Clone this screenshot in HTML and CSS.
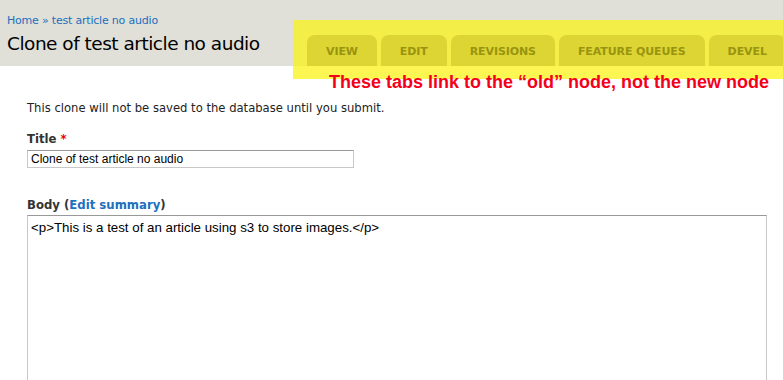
FILE: index.html
```html
<!DOCTYPE html>
<html>
<head>
<meta charset="utf-8">
<link rel="stylesheet" href="styles.css">
</head>
<body>
<div class="page">
  <div class="header">
    <div class="header-left">
      <div class="breadcrumb"><a href="#">Home</a> » <a href="#">test article no audio</a></div>
      <h1>Clone of test article no audio</h1>
    </div>
    <ul class="tabs">
      <li class="tab tab-view"><a href="#">View</a></li>
      <li class="tab tab-edit"><a href="#">Edit</a></li>
      <li class="tab tab-rev"><a href="#">Revisions</a></li>
      <li class="tab tab-fq"><a href="#">Feature queues</a></li>
      <li class="tab tab-devel"><a href="#">Devel</a></li>
    </ul>
    <div class="highlight"></div>
    <div class="note">These tabs link to the “old” node, not the new node</div>
  </div>
  <div class="content">
    <p class="message">This clone will not be saved to the database until you submit.</p>
    <div class="field">
      <label class="label">Title <span class="req">*</span></label>
      <div class="input">Clone of test article no audio</div>
    </div>
    <div class="field body-field">
      <label class="label">Body (<a href="#">Edit summary</a>)</label>
      <div class="textarea">&lt;p&gt;This is a test of an article using s3 to store images.&lt;/p&gt;</div>
    </div>
  </div>
</div>
</body>
</html>
```

FILE: styles.css
```css
html, body {
  margin: 0;
  padding: 0;
  background: #fff;
}
.page {
  width: 783px;
  height: 380px;
  overflow: hidden;
  font-family: "DejaVu Sans", sans-serif;
}
a {
  color: #2170bd;
  text-decoration: none;
}
.header {
  position: relative;
  display: flex;
  align-items: flex-end;
  height: 66px;
  background: #e0dfd8;
}
.header-left {
  flex: 0 0 300px;
  align-self: stretch;
  padding-left: 7px;
}
.breadcrumb {
  margin-top: 14px;
  font-size: 11px;
  line-height: 14px;
  letter-spacing: -0.2px;
  color: #2170bd;
}
h1 {
  margin: 4px 0 0;
  font-size: 18.5px;
  line-height: 24px;
  font-weight: normal;
  letter-spacing: -0.5px;
  color: #000;
  white-space: nowrap;
}
.tabs {
  position: relative;
  z-index: 2;
  display: flex;
  gap: 4px;
  margin: 0;
  padding: 0;
  list-style: none;
  flex-shrink: 0;
}
.tab {
  height: 31px;
  display: flex;
  align-items: center;
  padding: 2px 19px 0;
  box-sizing: border-box;
  background: #dcd534;
  border-radius: 8px 8px 0 0;
}
.tab a {
  color: #99940f;
  font-size: 11px;
  font-weight: bold;
  letter-spacing: -0.1px;
  text-transform: uppercase;
}
.highlight {
  position: absolute;
  z-index: 1;
  left: 293px;
  top: 20px;
  width: 490px;
  height: 59px;
  background: rgba(250, 243, 24, 0.75);
}
.note {
  position: absolute;
  z-index: 3;
  left: 329px;
  top: 72px;
  font-family: "Liberation Sans", sans-serif;
  font-size: 18px;
  font-weight: bold;
  line-height: 20px;
  color: #f5001a;
  white-space: nowrap;
}
.content {
  padding: 0 16px 0 27px;
}
.message {
  margin: 0;
  padding-top: 35px;
  font-size: 11.6px;
  line-height: 14px;
  color: #222;
}
.field {
  margin-top: 17px;
}
.label {
  display: block;
  font-size: 11.7px;
  font-weight: bold;
  line-height: 14px;
  color: #333;
}
.req {
  color: #e00;
}
.input {
  box-sizing: border-box;
  width: 327px;
  height: 18px;
  margin-top: 4px;
  padding: 0 3px;
  border: 1px solid #c8c8c8;
  border-top-color: #999;
  font-family: "Liberation Sans", sans-serif;
  font-size: 12px;
  line-height: 16px;
  color: #000;
}
.body-field {
  margin-top: 30px;
}
.textarea {
  box-sizing: border-box;
  width: 740px;
  height: 300px;
  margin-top: 3px;
  padding: 4px 3px;
  border: 1px solid #c8c8c8;
  border-top-color: #999;
  font-family: "Liberation Sans", sans-serif;
  font-size: 13.3px;
  line-height: 16px;
  color: #000;
}
```
